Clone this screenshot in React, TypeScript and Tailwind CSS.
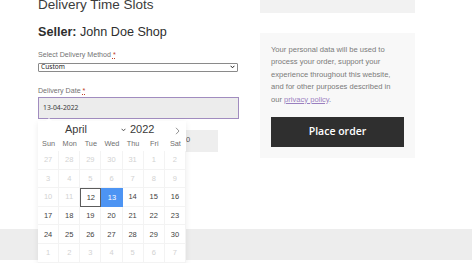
import React from "react";

const days: { d: number; muted?: boolean; today?: boolean; sel?: boolean }[] = [
  { d: 27, muted: true }, { d: 28, muted: true }, { d: 29, muted: true }, { d: 30, muted: true }, { d: 31, muted: true }, { d: 1, muted: true }, { d: 2, muted: true },
  { d: 3, muted: true }, { d: 4, muted: true }, { d: 5, muted: true }, { d: 6, muted: true }, { d: 7, muted: true }, { d: 8, muted: true }, { d: 9, muted: true },
  { d: 10, muted: true }, { d: 11, muted: true }, { d: 12, today: true }, { d: 13, sel: true }, { d: 14 }, { d: 15 }, { d: 16 },
  { d: 17 }, { d: 18 }, { d: 19 }, { d: 20 }, { d: 21 }, { d: 22 }, { d: 23 },
  { d: 24 }, { d: 25 }, { d: 26 }, { d: 27 }, { d: 28 }, { d: 29 }, { d: 30 },
  { d: 1, muted: true }, { d: 2, muted: true }, { d: 3, muted: true }, { d: 4, muted: true }, { d: 5, muted: true }, { d: 6, muted: true }, { d: 7, muted: true },
];

const weekdays = ["Sun", "Mon", "Tue", "Wed", "Thu", "Fri", "Sat"];

function Calendar() {
  return (
    <div className="absolute left-0 top-[121px] z-10 w-[148px] bg-white shadow-[0_2px_6px_rgba(0,0,0,0.08)]">
      <div className="absolute left-[8px] top-[-3px] h-0 w-0 border-x-[3px] border-b-[3px] border-x-transparent border-b-white" />
      <div className="relative flex h-[16px] items-center text-[11px] text-[#3a3a3a]">
        <span className="absolute left-[27px] top-[2px] leading-[13px]">April</span>
        <svg className="absolute left-[83px] top-[7px]" width="5" height="4" viewBox="0 0 5 4">
          <path d="M0.6 0.8 L2.5 2.8 L4.4 0.8" fill="none" stroke="#444" strokeWidth="0.9" />
        </svg>
        <span className="absolute left-[92px] top-[2px] leading-[13px]">2022</span>
        <svg className="absolute left-[137px] top-[6px]" width="5" height="8" viewBox="0 0 5 8">
          <path d="M1 0.8 L4 4 L1 7.2" fill="none" stroke="#777" strokeWidth="0.8" />
        </svg>
      </div>
      <div className="grid h-[14px] grid-cols-7 items-center text-[7.3px] text-[#6f6f6f]">
        {weekdays.map((w) => (
          <div key={w} className="text-center">{w}</div>
        ))}
      </div>
      <div className="grid grid-cols-7">
        {days.map((c, i) => (
          <div
            key={i}
            className={
              "flex h-[18.6px] items-center justify-center text-[7.5px] " +
              (c.sel
                ? "bg-[#4d94f3] text-white"
                : c.today
                ? "border border-[#5c5c5c] text-[#3a3a3a]"
                : c.muted
                ? "border-r border-b border-[#f3f3f3] text-[#d2d2d2]"
                : "border-r border-b border-[#f3f3f3] text-[#3f3f3f]")
            }
          >
            {c.d}
          </div>
        ))}
      </div>
    </div>
  );
}

export default function App() {
  return (
    <div
      className="relative h-[263px] w-[474px] overflow-hidden bg-white"
      style={{ fontFamily: '"Liberation Sans", Arial, sans-serif' }}
    >
      <div className="flex h-[229px] pl-[38px]">
        <div className="relative w-[202px]">
          <div className="mt-[-3px] text-[13.5px] leading-[16px] text-[#3c3c3c]">Delivery Time Slots</div>
          <div className="mt-[11.5px] text-[12.6px] leading-[15px] text-[#2e2e2e]">
            <span className="font-bold">Seller:</span> John Doe Shop
          </div>
          <div className="mt-[11.5px] text-[7.1px] leading-[9px] text-[#737373]">
            Select Delivery Method <span className="text-[#c0402a] underline decoration-dotted">*</span>
          </div>
          <div
            className="mt-[2.5px] flex h-[9.5px] w-[200px] items-center justify-between rounded-[1px] border border-[#8a8a8a] bg-white pl-[2px] pr-[2px] text-[6.6px] text-[#222]"
            style={{ fontFamily: '"Noto Sans", "Open Sans", sans-serif' }}
          >
            <span className="leading-[8px]">Custom</span>
            <svg width="5" height="4" viewBox="0 0 5 4">
              <path d="M0.6 0.8 L2.5 2.8 L4.4 0.8" fill="none" stroke="#222" strokeWidth="1" />
            </svg>
          </div>
          <div className="mt-[14.5px] text-[7.1px] leading-[9px] text-[#737373]">
            Delivery Date <span className="text-[#c0402a] underline decoration-dotted">*</span>
          </div>
          <div
            className="mt-[1.2px] flex h-[22.6px] w-[201px] items-center border-[1.5px] border-[#a18cbf] bg-[#ececec] pl-[4px] text-[6.8px] text-[#3a3a3a]"
            style={{ fontFamily: '"Noto Sans", "Open Sans", sans-serif' }}
          >
            13-04-2022
          </div>
          <div className="mt-[10.7px] ml-[147px] flex h-[22px] w-[33px] items-start bg-[#eeeeee] pl-[1px] pt-[5px] text-[7.5px] leading-[9px] text-[#555]">
            0
          </div>
          <Calendar />
        </div>
        <div className="ml-[20px] w-[155px]">
          <div className="h-[13px] bg-[#f2f2f2]" />
          <div className="mt-[20px] bg-[#f8f8f8] p-[11px]">
            <p className="text-[7.6px] leading-[12.4px] text-[#7a7a7a]">
              Your personal data will be used to
              <br />
              process your order, support your
              <br />
              experience throughout this website,
              <br />
              and for other purposes described in
              <br />
              our <span className="text-[#9a7fbf] underline">privacy policy</span>.
            </p>
            <div
              className="mt-[11px] flex h-[30px] w-[133px] items-center justify-center bg-[#2f2f2f] text-[10.5px] font-semibold text-white"
              style={{ fontFamily: '"Open Sans", sans-serif' }}
            >
              Place order
            </div>
          </div>
        </div>
      </div>
      <div className="h-[31px] w-[472px] bg-[#ededed]" />
    </div>
  );
}
